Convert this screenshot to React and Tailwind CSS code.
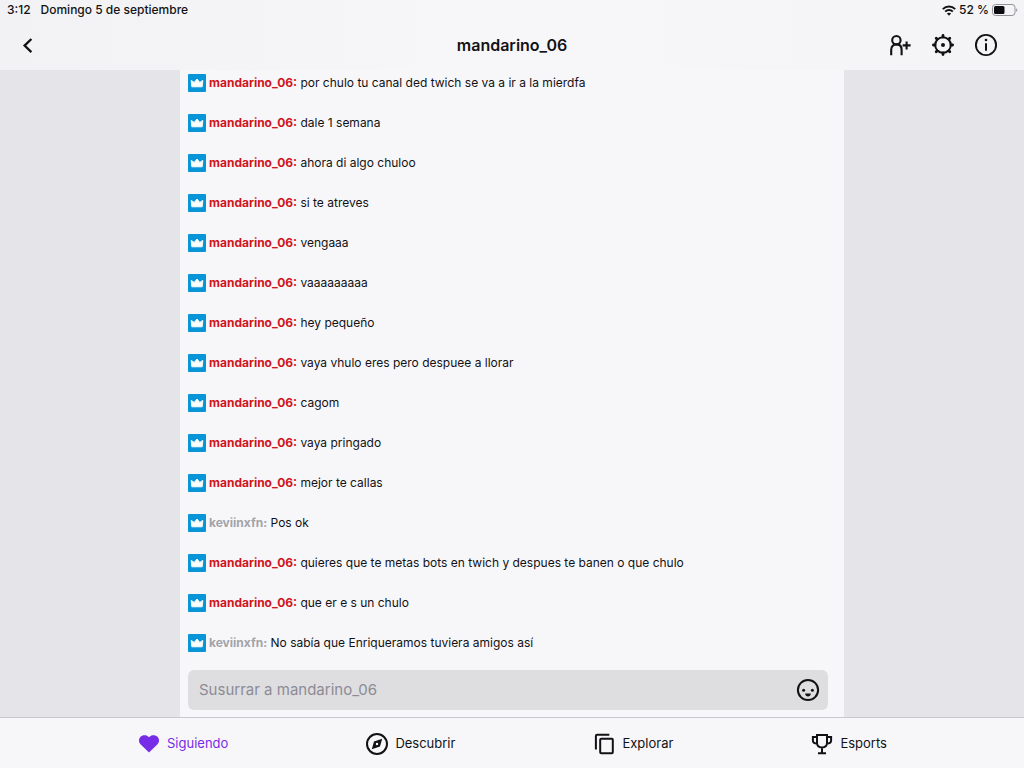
import React, { useState } from 'react';

const messages = [
  { user: 'mandarino_06', text: 'por chulo tu canal ded twich se va a ir a la mierdfa' },
  { user: 'mandarino_06', text: 'dale 1 semana' },
  { user: 'mandarino_06', text: 'ahora di algo chuloo' },
  { user: 'mandarino_06', text: 'si te atreves' },
  { user: 'mandarino_06', text: 'vengaaa' },
  { user: 'mandarino_06', text: 'vaaaaaaaaa' },
  { user: 'mandarino_06', text: 'hey pequeño' },
  { user: 'mandarino_06', text: 'vaya vhulo eres pero despuee a llorar' },
  { user: 'mandarino_06', text: 'cagom' },
  { user: 'mandarino_06', text: 'vaya pringado' },
  { user: 'mandarino_06', text: 'mejor te callas' },
  { user: 'keviinxfn', text: 'Pos ok' },
  { user: 'mandarino_06', text: 'quieres que te metas bots en twich y despues te banen o que chulo' },
  { user: 'mandarino_06', text: 'que er e s un chulo' },
  { user: 'keviinxfn', text: 'No sabía que Enriqueramos tuviera amigos así' },
];

const userColors = {
  mandarino_06: 'text-[#d0151c]',
  keviinxfn: 'text-[#a3a3a8]',
};

const CrownBadge = () => (
  <svg className="size-[18px] shrink-0" viewBox="0 0 18 18" aria-hidden="true">
    <rect width="18" height="18" rx="1" fill="#0896d8" />
    <path d="M3.8 12.8 3.2 6.4l3 2L9 5l2.8 3.4 3-2-.6 6.4z" fill="#fff" stroke="#fff" strokeWidth=".9" strokeLinejoin="round" />
  </svg>
);

const BackIcon = () => (
  <svg className="size-6" viewBox="0 0 24 24" fill="none" stroke="currentColor" strokeWidth="2.3">
    <path d="M15.4 6 8.6 12.6l6.8 6.6" />
  </svg>
);

const AddFriendIcon = () => (
  <svg className="size-6" viewBox="0 0 24 24" fill="none" stroke="currentColor" strokeWidth="2.1">
    <circle cx="8.4" cy="7.2" r="4.2" />
    <path d="M3.2 22.2v-5.4c0-3 1.8-5.4 5.2-5.4s5.2 2.4 5.2 5.4v5.4M14.6 12.4h8M18.6 8.4v8" />
  </svg>
);

const GearIcon = () => (
  <svg className="size-6" viewBox="0 0 24 24" fill="none" stroke="currentColor">
    <circle cx="12" cy="12" r="7.8" strokeWidth="2" />
    <circle cx="12" cy="12" r="2" fill="currentColor" stroke="none" />
    <path
      d="M12 4V2.4M12 20v1.6M4 12H2.4M20 12h1.6M6 6l-.8-.8M18 6l.8-.8M6 18l-.8.8M18 18l.8.8"
      strokeWidth="2.8"
      strokeLinecap="round"
    />
  </svg>
);

const InfoIcon = () => (
  <svg className="size-6" viewBox="0 0 24 24" fill="none" stroke="currentColor">
    <circle cx="12" cy="12" r="10.1" strokeWidth="1.9" />
    <path d="M12 10.3v7.5" strokeWidth="2" />
    <circle cx="12" cy="7" r="1.3" fill="currentColor" stroke="none" />
  </svg>
);

const WifiIcon = () => (
  <svg className="h-[11px] w-[14px]" viewBox="0 0 14 11" fill="none" stroke="currentColor" strokeWidth="2">
    <path d="M.8 4.1C2.5 2.4 4.6 1.5 7 1.5s4.5.9 6.2 2.6M3.2 6.6C4.2 5.6 5.5 5 7 5s2.8.6 3.8 1.6" />
    <path d="M7 10.7 4.9 8.6C6.1 7.4 7.9 7.4 9.1 8.6z" fill="currentColor" stroke="none" />
  </svg>
);

const BatteryIcon = () => (
  <svg className="h-3 w-[26px]" viewBox="0 0 26 12" aria-label="Batería">
    <rect x=".5" y=".5" width="22.5" height="11" rx="3" fill="none" stroke="#929297" />
    <rect x="2" y="2" width="10.5" height="8" rx="1.5" fill="#0c0c0e" />
    <path d="M24.2 4.2c1.5.5 1.5 3.1 0 3.6z" fill="#929297" />
  </svg>
);

const SmileIcon = () => (
  <svg className="size-6" viewBox="0 0 24 24" fill="none" stroke="currentColor" strokeWidth="2">
    <circle cx="12" cy="12" r="10.1" />
    <circle cx="7.6" cy="12.2" r="1.5" fill="currentColor" stroke="none" />
    <circle cx="16.4" cy="12.2" r="1.5" fill="currentColor" stroke="none" />
    <path d="M9.2 15.6h5.6c0 1.8-1.2 3-2.8 3s-2.8-1.2-2.8-3z" fill="currentColor" stroke="none" />
  </svg>
);

const HeartIcon = () => (
  <svg className="size-6" viewBox="0 0 24 24" fill="currentColor">
    <path d="M12 20.6 3.7 12.5C1.5 10.2 1.4 7 3.3 5c2.2-2.3 6.6-2.4 8.7.3 2.1-2.7 6.500-2.600 8.700-.3 1.900 2 1.800 5.200-.4 7.500z" />
  </svg>
);

const CompassIcon = () => (
  <svg className="size-6" viewBox="0 0 24 24" fill="none" stroke="currentColor" strokeWidth="2">
    <circle cx="12" cy="12" r="10" />
    <path
      fillRule="evenodd"
      d="M17.2 6.8 15 14.6l-8.2 2.6L9 9.4zM12 10.8a1.2 1.2 0 1 0 0 2.4 1.2 1.2 0 0 0 0-2.4z"
      fill="currentColor"
      stroke="none"
    />
  </svg>
);

const BrowseIcon = () => (
  <svg className="size-6" viewBox="0 0 24 24" fill="none" stroke="currentColor" strokeWidth="2">
    <path d="M3.9 17.4V4q0-1.2 1.2-1.2h12.2" />
    <rect x="8.2" y="6.8" width="12.6" height="14.4" rx="1" />
  </svg>
);

const TrophyIcon = () => (
  <svg className="size-6" viewBox="0 0 24 24" fill="none" stroke="currentColor" strokeWidth="2">
    <path d="M7 3h10v8c0 2.6-1.8 4.4-5 4.4S7 13.6 7 11zM7 5H2.9v3.4c0 2 1.6 3 4.1 3M17 5h4.1v3.4c0 2-1.6 3-4.1 3M12 15.4v5.4M8 21.2h8" />
  </svg>
);

const tabs = [
  { name: 'Siguiendo', Icon: HeartIcon },
  { name: 'Descubrir', Icon: CompassIcon },
  { name: 'Explorar', Icon: BrowseIcon },
  { name: 'Esports', Icon: TrophyIcon },
];

const Message = ({ user, text }) => (
  <li className="flex h-10 shrink-0 items-center gap-[3px] text-xs">
    <CrownBadge />
    <p>
      <span className={`font-bold ${userColors[user]}`}>{user}:</span> {text}
    </p>
  </li>
);

const App = () => {
  const [draft, setDraft] = useState('');
  const [activeTab, setActiveTab] = useState('Siguiendo');

  return (
    <div className="flex h-screen flex-col bg-[#e5e4e9] font-['Inter','Liberation_Sans',sans-serif] text-[#121214]">
      <header className="shrink-0 bg-linear-to-r from-[#f2f2f5] via-[#f7f7fa] to-[#f4f4f7]">
        {/* Status bar */}
        <div className="flex h-5 items-center justify-between pr-[6px] pl-[7px] text-xs font-medium">
          <div className="flex gap-[10px]">
            <span>3:12</span>
            <span>Domingo 5 de septiembre</span>
          </div>
          <div className="flex items-center gap-[3px]">
            <WifiIcon />
            <span>52 %</span>
            <BatteryIcon />
          </div>
        </div>

        {/* Navigation */}
        <div className="grid h-[50px] grid-cols-[1fr_auto_1fr] items-center px-4">
          <button className="justify-self-start" aria-label="Atrás">
            <BackIcon />
          </button>
          <h1 className="text-base font-semibold">mandarino_06</h1>
          <div className="flex gap-[19px] justify-self-end pr-[10px]">
            <button aria-label="Añadir amigo"><AddFriendIcon /></button>
            <button aria-label="Ajustes"><GearIcon /></button>
            <button aria-label="Información"><InfoIcon /></button>
          </div>
        </div>
      </header>

      <main className="mx-auto flex min-h-0 w-full max-w-[664px] flex-1 flex-col bg-[#f7f7fa] pr-4 pb-[7px] pl-2">
        <ul className="flex min-h-0 flex-1 flex-col justify-end overflow-hidden">
          {messages.map((message, index) => (
            <Message key={index} user={message.user} text={message.text} />
          ))}
        </ul>
        <div className="mt-[7px] flex h-10 shrink-0 items-center rounded-md bg-[#dedee0] pr-2 pl-[11px]">
          <input
            type="text"
            aria-label="Susurrar a mandarino_06"
            placeholder="Susurrar a mandarino_06"
            className="min-w-0 flex-1 bg-transparent text-[15px] outline-none placeholder:text-[#8c8b96]"
            value={draft}
            onChange={(e) => setDraft(e.target.value)}
          />
          <button aria-label="Emoticonos"><SmileIcon /></button>
        </div>
      </main>

      <nav className="flex h-[51px] shrink-0 items-center justify-evenly border-t border-[#c9c9cd] bg-[#f7f7fa] pt-px text-[13px]">
        {tabs.map(({ name, Icon }) => (
          <button
            key={name}
            className={`flex items-center gap-[6px] ${activeTab === name ? 'text-[#772ce8]' : ''}`}
            onClick={() => setActiveTab(name)}
          >
            <Icon />
            {name}
          </button>
        ))}
      </nav>
    </div>
  );
};

export default App;
